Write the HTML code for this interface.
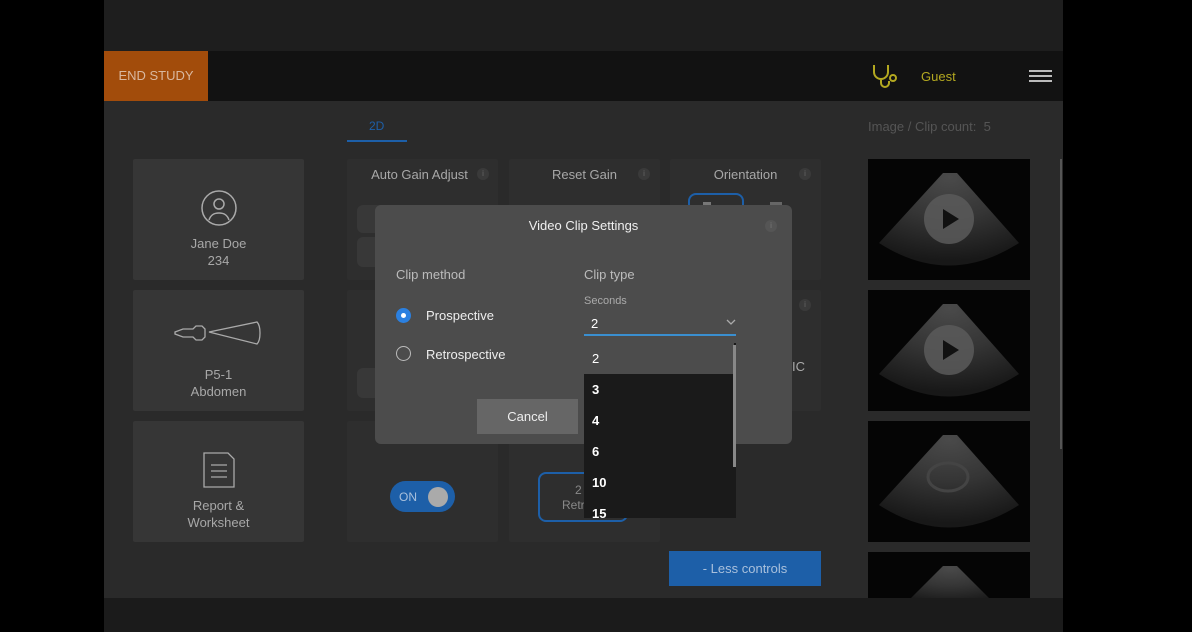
<!DOCTYPE html>
<html><head><meta charset="utf-8"><style>
*{margin:0;padding:0;box-sizing:border-box}
body{width:1192px;height:632px;background:#000;position:relative;overflow:hidden;font-family:"Liberation Sans",sans-serif}
.a{position:absolute}
.card{position:absolute;background:#363636;border-radius:2px}
.mcard{position:absolute;background:#2e2e2e;border-radius:2px}
.t{position:absolute;color:#a8a8a8;font-size:13px;text-align:center}
.info{position:absolute;width:12px;height:12px;border-radius:50%;background:#3a3a3a;color:#666;font-size:8px;text-align:center;line-height:12px}
.thumb{position:absolute;left:868px;width:162px;background:#050505;overflow:hidden}
.opt{position:absolute;left:0;width:150px;height:31px;color:#fff;font-size:13px;font-weight:bold;padding-left:8px;line-height:31px}
</style></head><body>
<div class="a" style="left:104px;top:0;width:959px;height:51px;background:#1e1e1e"></div>
<div class="a" style="left:104px;top:51px;width:959px;height:50px;background:#121212"></div>
<div class="a" style="left:104px;top:51px;width:104px;height:50px;background:#a24c0b;color:#d9b8a0;font-size:13px;line-height:50px;text-align:center">END STUDY</div>
<svg class="a" style="left:870px;top:62px" width="32" height="28" viewBox="0 0 32 28"><path d="M4 3v7a7 7 0 0 0 14 0V3M11 17v4a4 4 0 0 0 8 0v-2" fill="none" stroke="#b3a820" stroke-width="2"/><circle cx="23" cy="16" r="3" fill="none" stroke="#b3a820" stroke-width="2"/></svg>
<div class="a" style="left:921px;top:69px;color:#b3a820;font-size:13px">Guest</div>
<div class="a" style="left:1029px;top:70px;width:23px;height:2px;background:#bbb;box-shadow:0 5px 0 #bbb,0 10px 0 #bbb"></div>
<div class="a" style="left:104px;top:101px;width:959px;height:497px;background:#2a2a2a"></div>
<div class="a" style="left:104px;top:598px;width:959px;height:34px;background:#1b1b1b"></div>
<div class="a" style="left:1060px;top:159px;width:2px;height:290px;background:#555"></div>
<div class="a" style="left:369px;top:119px;color:#1d5fa8;font-size:12px">2D</div>
<div class="a" style="left:347px;top:140px;width:60px;height:2px;background:#1d5fa8"></div>
<div class="a" style="left:868px;top:119px;color:#555;font-size:13px">Image / Clip count:&nbsp; 5</div>
<!-- left cards -->
<div class="card" style="left:133px;top:159px;width:171px;height:121px"></div>
<svg class="a" style="left:200px;top:189px" width="38" height="38"><circle cx="19" cy="19" r="17" fill="none" stroke="#aaa" stroke-width="1.5"/><circle cx="19" cy="15" r="5" fill="none" stroke="#aaa" stroke-width="1.5"/><path d="M9 31c2-6 6-7 10-7s8 1 10 7" fill="none" stroke="#aaa" stroke-width="1.5"/></svg>
<div class="t" style="left:133px;top:235px;width:171px;line-height:17px">Jane Doe<br>234</div>
<div class="card" style="left:133px;top:290px;width:171px;height:121px"></div>
<svg class="a" style="left:173px;top:320px" width="92" height="26"><path d="M2 12l8-3h10l3-3h6l3 3v8l-3 3h-6l-3-3H10l-8-3z M36 12l48-10c4 4 4 18 0 22z" fill="none" stroke="#aaa" stroke-width="1.3"/></svg>
<div class="t" style="left:133px;top:366px;width:171px;line-height:17px">P5-1<br>Abdomen</div>
<div class="card" style="left:133px;top:421px;width:171px;height:121px"></div>
<svg class="a" style="left:202px;top:451px" width="34" height="38"><path d="M2 2h24l6 6v28H2z" fill="none" stroke="#aaa" stroke-width="1.3"/><path d="M9 14h16M9 20h16M9 26h16" stroke="#aaa" stroke-width="1.3"/></svg>
<div class="t" style="left:133px;top:497px;width:171px;line-height:17px">Report &amp;<br>Worksheet</div>
<!-- middle cards -->
<div class="mcard" style="left:347px;top:159px;width:151px;height:121px"></div>
<div class="a" style="left:357px;top:205px;width:65px;height:28px;background:#383838;border-radius:6px"></div>
<div class="a" style="left:357px;top:237px;width:65px;height:30px;background:#383838;border-radius:6px"></div>
<div class="t" style="left:347px;top:167px;width:145px">Auto Gain Adjust</div><div class="info" style="left:477px;top:168px">i</div>
<div class="mcard" style="left:509px;top:159px;width:151px;height:121px"></div>
<div class="t" style="left:509px;top:167px;width:151px">Reset Gain</div><div class="info" style="left:638px;top:168px">i</div>
<div class="mcard" style="left:670px;top:159px;width:151px;height:121px"></div>
<div class="t" style="left:670px;top:167px;width:151px">Orientation</div><div class="info" style="left:799px;top:168px">i</div>
<div class="a" style="left:688px;top:193px;width:56px;height:30px;border:2px solid #1d5fa8;border-radius:8px"></div>
<div class="a" style="left:703px;top:202px;width:8px;height:4px;background:#777"></div>
<div class="a" style="left:770px;top:202px;width:12px;height:4px;background:#666"></div>
<div class="mcard" style="left:347px;top:290px;width:151px;height:121px"></div>
<div class="a" style="left:357px;top:368px;width:65px;height:30px;background:#383838;border-radius:6px"></div>
<div class="mcard" style="left:509px;top:290px;width:151px;height:121px"></div>
<div class="mcard" style="left:670px;top:290px;width:151px;height:121px"></div>
<div class="info" style="left:799px;top:299px">i</div>
<div class="a" style="left:792px;top:359px;color:#aaa;font-size:13px">IC</div>
<div class="mcard" style="left:347px;top:421px;width:151px;height:121px"></div>
<div class="mcard" style="left:509px;top:421px;width:151px;height:121px"></div>
<div class="a" style="left:390px;top:481px;width:65px;height:31px;border-radius:16px;background:#1d5fa8"></div>
<div class="a" style="left:399px;top:490px;color:#a9c0dc;font-size:12px">ON</div>
<div class="a" style="left:428px;top:487px;width:20px;height:20px;border-radius:50%;background:#aaa"></div>
<div class="a" style="left:538px;top:472px;width:90px;height:50px;border:2px solid #1d5fa8;border-radius:8px"></div>
<div class="t" style="left:540px;top:483px;width:86px;line-height:15px;color:#888;font-size:12px">2 s<br>Retrosp</div>
<div class="a" style="left:669px;top:551px;width:152px;height:35px;background:#1d5fa8;color:#a9c0dc;font-size:13px;line-height:35px;text-align:center">- Less controls</div>
<!-- thumbs -->
<svg width="0" height="0" style="position:absolute"><defs><radialGradient id="g" cx="50%" cy="5%" r="90%"><stop offset="0" stop-color="#4a4a4a"/><stop offset="0.5" stop-color="#353535"/><stop offset="1" stop-color="#181818"/></radialGradient></defs></svg>
<div class="thumb" style="top:159px;height:121px"><svg width="162" height="121"><path d="M75 14h14l62 70q-70 45-140 0z" fill="url(#g)"/><circle cx="81" cy="60" r="25" fill="#5a5a5a" opacity=".85"/><path d="M75 50v20l16-10z" fill="#111"/></svg></div>
<div class="thumb" style="top:290px;height:121px"><svg width="162" height="121"><path d="M75 14h14l62 70q-70 45-140 0z" fill="url(#g)"/><circle cx="81" cy="60" r="25" fill="#5a5a5a" opacity=".85"/><path d="M75 50v20l16-10z" fill="#111"/></svg></div>
<div class="thumb" style="top:421px;height:121px"><svg width="162" height="121"><path d="M75 14h14l62 70q-70 45-140 0z" fill="url(#g)"/><ellipse cx="80" cy="56" rx="20" ry="14" fill="none" stroke="#444" stroke-width="3"/></svg></div>
<div class="thumb" style="top:552px;height:46px"><svg width="162" height="46"><path d="M75 14h14l40 40H35z" fill="url(#g)"/></svg></div>
<!-- modal -->
<div class="a" style="left:375px;top:205px;width:417px;height:239px;background:#4c4c4c;border-radius:6px"></div>
<div class="a" style="left:375px;top:218px;width:417px;text-align:center;color:#f0f0f0;font-size:13px">Video Clip Settings</div>
<div class="info" style="left:765px;top:220px;background:#555;color:#777">i</div>
<div class="a" style="left:396px;top:267px;color:#bbb;font-size:13px">Clip method</div>
<div class="a" style="left:584px;top:267px;color:#bbb;font-size:13px">Clip type</div>
<div class="a" style="left:584px;top:295px;color:#aaa;font-size:11px">Seconds</div>
<div class="a" style="left:396px;top:308px;width:15px;height:15px;border-radius:50%;background:#2b80e0;border:3px solid #2b80e0"><div style="width:5px;height:5px;margin:2px;border-radius:50%;background:#fff"></div></div>
<div class="a" style="left:426px;top:308px;color:#eee;font-size:13px">Prospective</div>
<div class="a" style="left:396px;top:346px;width:15px;height:15px;border-radius:50%;border:1.5px solid #bbb"></div>
<div class="a" style="left:426px;top:347px;color:#eee;font-size:13px">Retrospective</div>
<div class="a" style="left:591px;top:316px;color:#fff;font-size:13px">2</div>
<svg class="a" style="left:726px;top:319px" width="10" height="6"><path d="M1 1l4 4 4-4" fill="none" stroke="#aaa" stroke-width="1.3"/></svg>
<div class="a" style="left:584px;top:334px;width:152px;height:2px;background:#3a8fd0"></div>
<div class="a" style="left:477px;top:399px;width:101px;height:35px;background:#666;color:#eee;font-size:13px;line-height:35px;text-align:center">Cancel</div>
<div class="a" style="left:584px;top:343px;width:152px;height:175px;background:#1a1a1a;overflow:hidden">
<div class="opt" style="top:0;background:#4c4c4c;font-weight:normal">2</div>
<div class="opt" style="top:31px">3</div><div class="opt" style="top:62px">4</div><div class="opt" style="top:93px">6</div><div class="opt" style="top:124px">10</div><div class="opt" style="top:155px">15</div>
<div class="a" style="left:149px;top:2px;width:3px;height:122px;background:#888"></div>
</div>
</body></html>
